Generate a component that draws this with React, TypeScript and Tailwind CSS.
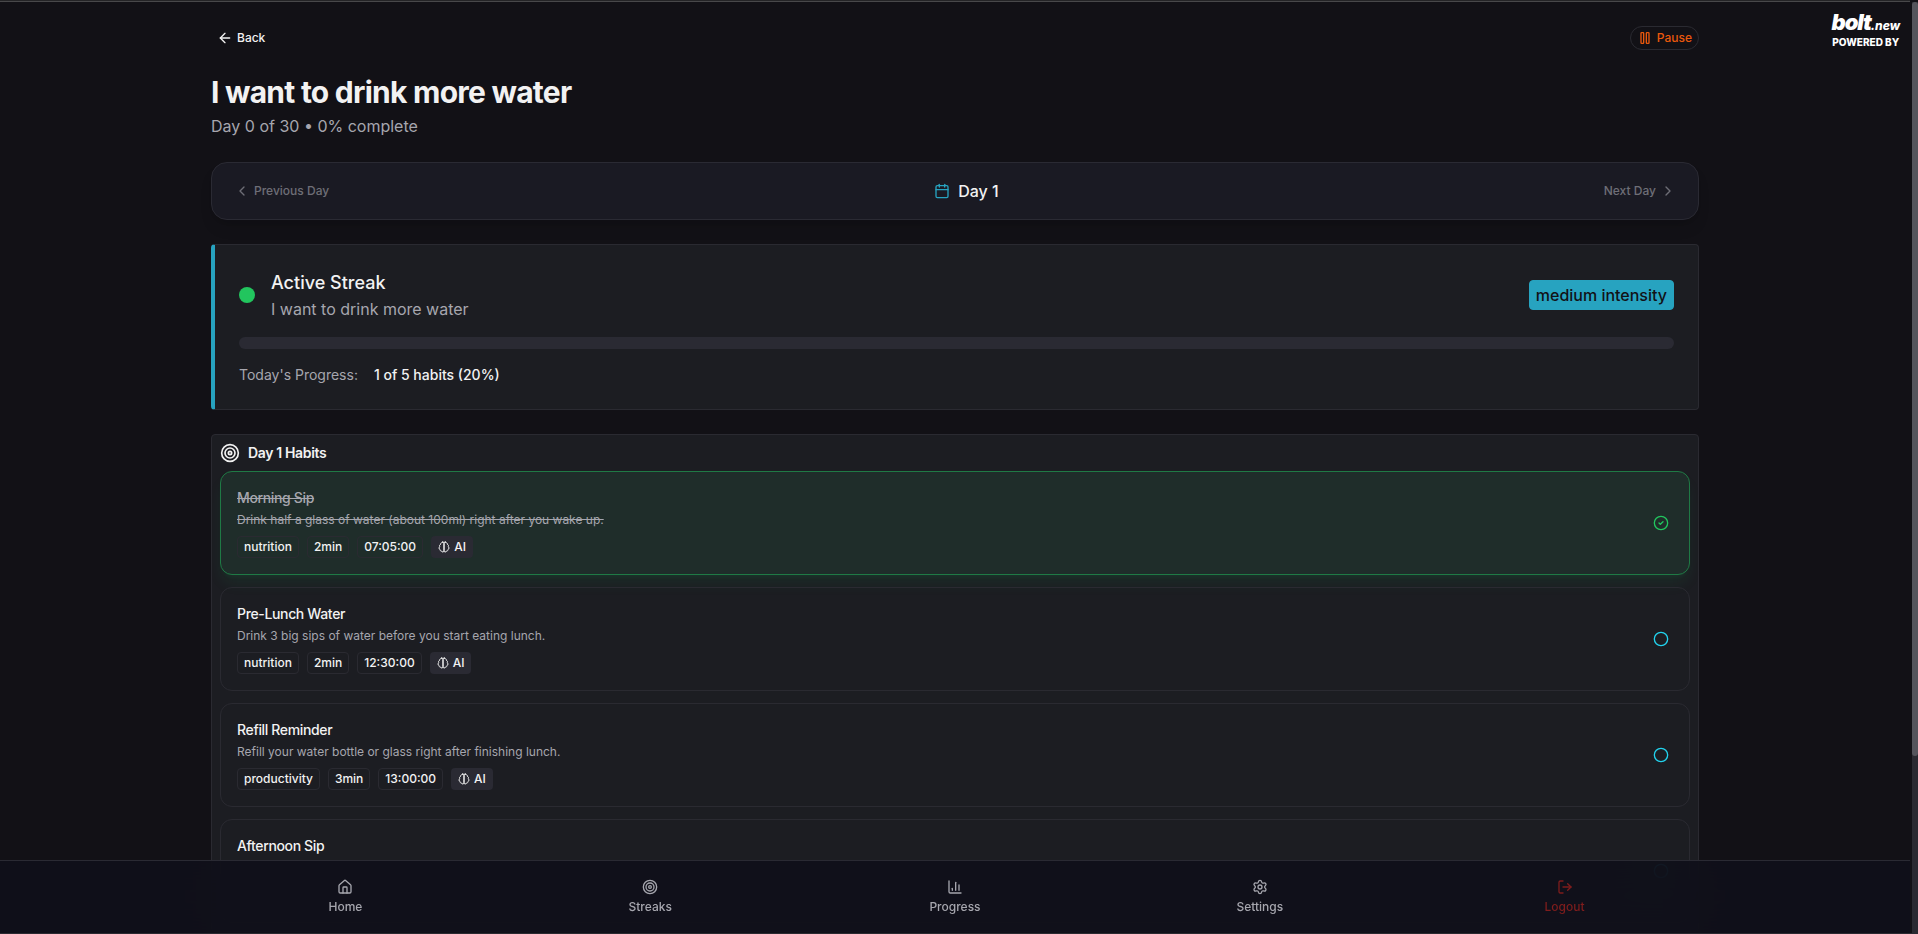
import React, { useState } from 'react';
import { ArrowLeft, Calendar, ChartColumn, ChevronLeft, ChevronRight, Circle, CircleCheck, House, LogOut, Settings, Target } from 'lucide-react';

interface Habit {
  id: number;
  title: string;
  description?: string;
  tags: string[];
}

const HABITS: Habit[] = [
  {
    id: 1,
    title: 'Morning Sip',
    description: 'Drink half a glass of water (about 100ml) right after you wake up.',
    tags: ['nutrition', '2min', '07:05:00'],
  },
  {
    id: 2,
    title: 'Pre-Lunch Water',
    description: 'Drink 3 big sips of water before you start eating lunch.',
    tags: ['nutrition', '2min', '12:30:00'],
  },
  {
    id: 3,
    title: 'Refill Reminder',
    description: 'Refill your water bottle or glass right after finishing lunch.',
    tags: ['productivity', '3min', '13:00:00'],
  },
  { id: 4, title: 'Afternoon Sip', tags: [] },
];

const NAV_ITEMS = [
  { label: 'Home', icon: House, color: 'text-[#a6a6ae]' },
  { label: 'Streaks', icon: Target, color: 'text-[#a6a6ae]' },
  { label: 'Progress', icon: ChartColumn, color: 'text-[#a6a6ae]' },
  { label: 'Settings', icon: Settings, color: 'text-[#a6a6ae]' },
  { label: 'Logout', icon: LogOut, color: 'text-[#7f1d1d]' },
];

const PauseIcon: React.FC = () => (
  <svg xmlns="http://www.w3.org/2000/svg" className="size-4" fill="none" viewBox="0 0 24 24" stroke="currentColor" strokeWidth={2} strokeLinecap="round" strokeLinejoin="round">
    <rect x="14" y="4" width="4" height="16" rx="1" />
    <rect x="6" y="4" width="4" height="16" rx="1" />
  </svg>
);

const BrainIcon: React.FC = () => (
  <svg xmlns="http://www.w3.org/2000/svg" className="size-3" fill="none" viewBox="0 0 24 24" stroke="currentColor" strokeWidth={2} strokeLinecap="round" strokeLinejoin="round">
    <path d="M9.5 2A2.5 2.5 0 0 1 12 4.5v15a2.5 2.5 0 0 1-4.96.44 2.5 2.5 0 0 1-2.96-3.08 3 3 0 0 1-.34-5.58 2.5 2.5 0 0 1 1.32-4.24 2.5 2.5 0 0 1 1.98-3A2.5 2.5 0 0 1 9.5 2Z" />
    <path d="M14.5 2A2.5 2.5 0 0 0 12 4.5v15a2.5 2.5 0 0 0 4.96.44 2.5 2.5 0 0 0 2.96-3.08 3 3 0 0 0 .34-5.58 2.5 2.5 0 0 0-1.32-4.24 2.5 2.5 0 0 0-1.98-3A2.5 2.5 0 0 0 14.5 2Z" />
  </svg>
);

interface HabitCardProps {
  habit: Habit;
  done: boolean;
  onToggle: (id: number) => void;
}

const HabitCard: React.FC<HabitCardProps> = ({ habit, done, onToggle }) => (
  <li className={`flex min-h-26 items-center justify-between rounded-xl border p-4 ${done ? 'border-[#1f7a45] bg-[#1f2d2a] shadow-lg shadow-[#22c55e]/10' : 'border-[#2a2a31]'}`}>
    <div className="self-stretch">
      <h3 className={`text-sm font-medium tracking-tight ${done ? 'text-[#a6a6ae] line-through' : 'text-[#f2f2f2]'}`}>{habit.title}</h3>
      {habit.description && (
        <p className={`mt-1 text-xs text-[#a6a6ae] ${done ? 'line-through' : ''}`}>{habit.description}</p>
      )}
      {habit.tags.length > 0 && (
        <div className="mt-2 flex gap-2 text-xs font-medium text-[#f2f2f2]">
          {habit.tags.map(tag => (
            <span key={tag} className="rounded-sm border border-[#2a2a31] px-1.5 py-0.5">{tag}</span>
          ))}
          <span className="flex items-center gap-1 rounded-sm border border-transparent bg-[#2a2a33] px-1.5 py-0.5">
            <BrainIcon />
            AI
          </span>
        </div>
      )}
    </div>
    <button
      type="button"
      aria-label={done ? 'Mark as not done' : 'Mark as done'}
      onClick={() => onToggle(habit.id)}
      className={`p-1 ${done ? 'text-[#22c55e]' : 'text-[#22d3ee]'}`}
    >
      {done ? <CircleCheck className="size-4" /> : <Circle className="size-4" />}
    </button>
  </li>
);

export default function App() {
  const [completed, setCompleted] = useState<number[]>([1]);

  const toggleHabit = (id: number) => {
    setCompleted(prev => (prev.includes(id) ? prev.filter(item => item !== id) : [...prev, id]));
  };

  return (
    <div className="flex h-screen overflow-hidden border-b border-[#2a2a31] bg-[#121116] font-['Inter',sans-serif] text-[#f2f2f2]">
      <div className="relative min-w-0 flex-1 overflow-hidden">
        <main className="mx-auto flex max-w-screen-2xl flex-col gap-6 px-6 pt-[26px]">
          <header>
            <div className="flex items-center justify-between text-xs font-medium">
              <button type="button" className="flex h-6 items-center gap-1 px-1.5">
                <ArrowLeft className="size-4" />
                Back
              </button>
              <button type="button" className="flex h-6 items-center gap-1 rounded-full border border-[#2a2a31] px-1.5 text-[#ea580c]">
                <PauseIcon />
                Pause
              </button>
            </div>
            <h1 className="mt-6 text-3xl font-bold tracking-tight">I want to drink more water</h1>
            <p className="mt-1 text-base text-[#a6a6ae]">Day 0 of 30 • 0% complete</p>
          </header>

          <nav className="flex items-center justify-between rounded-2xl border border-[#2a2a33] bg-[#1a1a23] p-4 shadow-lg">
            <button type="button" disabled className="flex h-6 items-center gap-1 px-1.5 text-xs font-medium text-[#a6a6ae] opacity-60">
              <ChevronLeft className="size-4" />
              Previous Day
            </button>
            <div className="flex items-center gap-2 font-medium">
              <Calendar className="size-4 text-[#27a3c0]" />
              Day 1
            </div>
            <button type="button" disabled className="flex h-6 items-center gap-1 px-1.5 text-xs font-medium text-[#a6a6ae] opacity-60">
              Next Day
              <ChevronRight className="size-4" />
            </button>
          </nav>

          <section className="rounded-sm border border-l-4 border-[#2a2a31] border-l-[#27a3c0] bg-[#1c1d22] p-6">
            <div className="flex items-center justify-between">
              <div className="flex items-center gap-4">
                <span className="size-4 rounded-full bg-[#22c55e]"></span>
                <div>
                  <h2 className="text-lg font-medium">Active Streak</h2>
                  <p className="text-base text-[#a6a6ae]">I want to drink more water</p>
                </div>
              </div>
              <span className="rounded-sm border border-[#27a3c0] bg-[#27a3c0] px-1.5 py-0.5 font-medium text-[#121116]">medium intensity</span>
            </div>
            <div className="mt-4 h-3 rounded-full bg-[#2a2a33]"></div>
            <div className="mt-4 flex gap-4 text-sm">
              <span className="text-[#a6a6ae]">Today's Progress:</span>
              <span className="font-medium">1 of 5 habits (20%)</span>
            </div>
          </section>

          <section className="rounded-sm border border-[#2a2a31] bg-[#1c1d22] p-2">
            <h2 className="flex items-center gap-2 text-sm font-semibold tracking-tight">
              <Target className="size-5" />
              Day 1 Habits
            </h2>
            <ul className="mt-2 flex flex-col gap-3">
              {HABITS.map(habit => (
                <HabitCard key={habit.id} habit={habit} done={completed.includes(habit.id)} onToggle={toggleHabit} />
              ))}
            </ul>
          </section>
        </main>

        {/* Powered-by badge */}
        <a href="#bolt" className="absolute top-2.5 right-2.5 flex flex-col items-center text-white">
          <span className="flex items-baseline text-[22px] leading-6 font-black tracking-tighter italic">
            bolt<span className="text-xs font-extrabold tracking-normal">.new</span>
          </span>
          <span className="text-[10px] leading-4 font-extrabold">POWERED BY</span>
        </a>

        {/* Bottom navigation */}
        <nav className="absolute inset-x-0 bottom-0 border-t border-[#2a2a33] bg-[#0f0f19]/90 py-2 backdrop-blur-xl">
          <div className="mx-auto grid max-w-screen-2xl grid-cols-5 gap-1 px-2">
            {NAV_ITEMS.map(({ label, icon: Icon, color }) => (
              <a key={label} href={`#${label.toLowerCase()}`} className={`flex h-14 flex-col items-center justify-center gap-1 text-xs font-medium ${color}`}>
                <Icon className="size-4" />
                {label}
              </a>
            ))}
          </div>
        </nav>
        <div className="absolute inset-x-0 top-0 h-0.5 border-b border-[#48484a] bg-[#242426]"></div>
      </div>

      {/* Scroll track */}
      <div className="w-2 pt-0.5 pl-0.5">
        <div className="h-full bg-[#2a2a31]">
          <div className="h-[81%] rounded-full bg-[#55555c]"></div>
        </div>
      </div>
    </div>
  );
}
